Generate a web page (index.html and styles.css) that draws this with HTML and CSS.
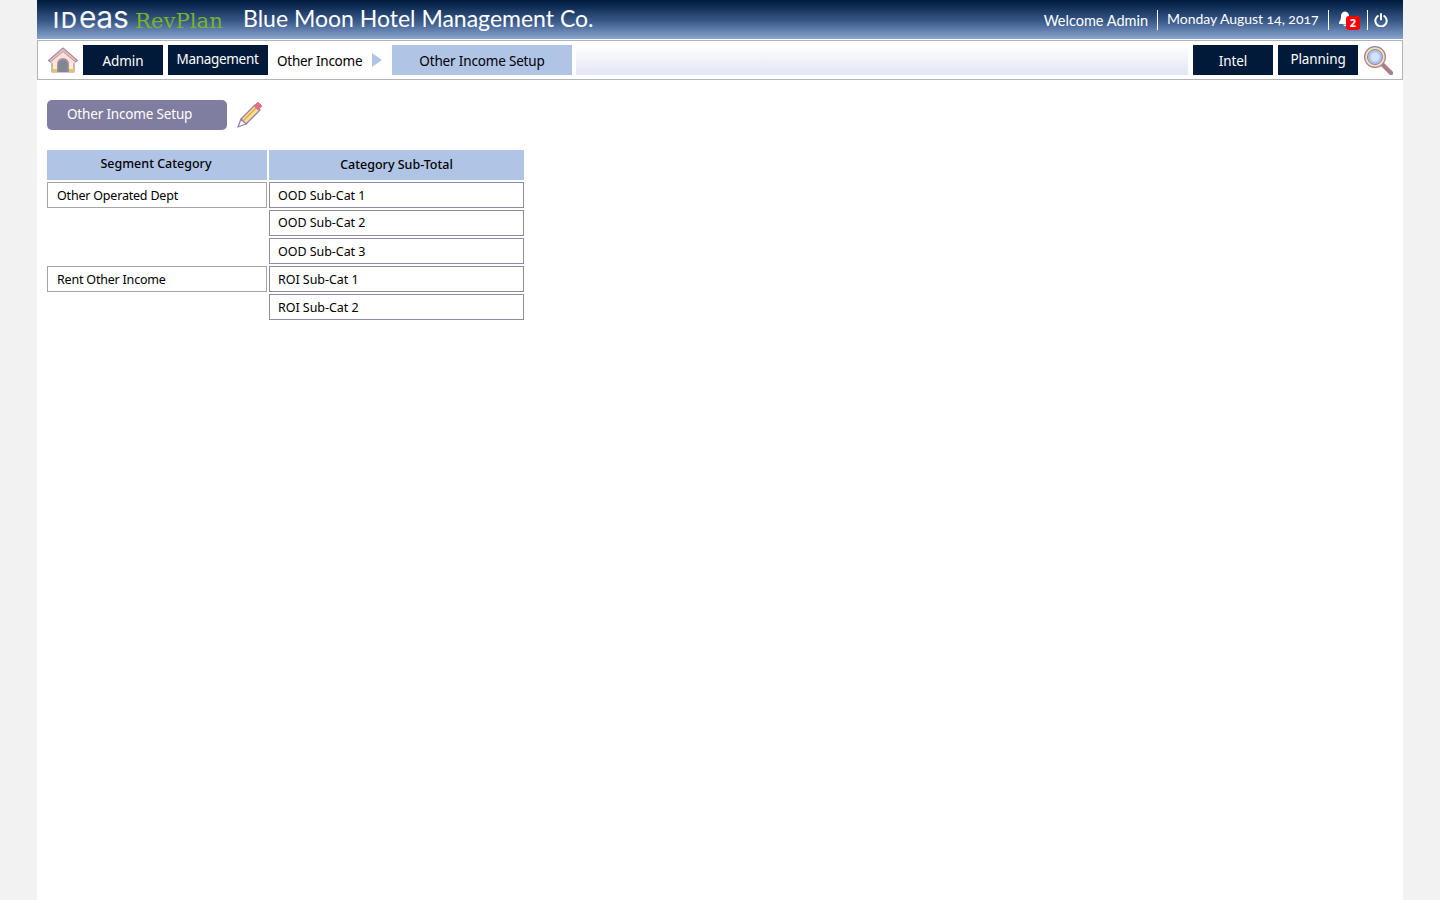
FILE: index.html
```html
<!DOCTYPE html>
<html lang="en">
<head>
<meta charset="utf-8">
<title>Other Income Setup</title>
<link rel="stylesheet" href="styles.css">
</head>
<body>
<div class="page">
  <header class="topbar">
    <div class="brand"><span class="logo"><span class="logo-caps">ID</span><span class="logo-low">eas</span></span><span class="revplan">RevPlan</span></div>
    <div class="company">Blue Moon Hotel Management Co.</div>
    <div class="user">
      <span class="welcome">Welcome Admin</span>
      <span class="date">Monday August 14, 2017</span>
      <span class="bell">
        <svg width="16" height="16" viewBox="0 0 16 16"><path fill="#fff" d="M7 .5C4.200.5 3 2.700 3 5.500c0 2.800-.8 4.500-2 5.700V13h12v-1.800c-1.200-1.200-2-2.900-2-5.700C11 2.700 9.800.5 7 .5z"/><path fill="#fff" d="M5.300 13.500h3.400a1.700 1.700 0 0 1-3.400 0z"/></svg>
        <b class="badge">2</b>
      </span>
      <span class="power">
        <svg width="14" height="14" viewBox="0 0 14 14" fill="none" stroke="#fff" stroke-width="2" stroke-linecap="round"><path d="M7 1v5.500"/><path d="M3.800 3a5.700 5.700 0 1 0 6.400 0"/></svg>
      </span>
    </div>
  </header>
  <nav class="navbar">
    <svg class="home" width="32" height="28" viewBox="0 0 32 28">
      <path d="M5 13h22v13H5z" fill="#fdeec0" stroke="#a58cb5" stroke-width="1.200"/>
      <path d="M16 2 1.500 14.500l2 1.500L16 6l12.500 10 2-1.500z" fill="#f3c3a8" stroke="#a58cb5" stroke-width="1.200" stroke-linejoin="round"/>
      <path d="M16 6 4.500 15.500V17h23v-1.500z" fill="#fbe2d2"/>
      <path d="M10 26V18a6 6 0 0 1 12 0v8z" fill="#a58cb5"/>
      <path d="M11.500 26V18.500a4.500 4.500 0 0 1 9 0V26z" fill="#7f8790"/>
      <path d="M5 23h5v3H5zM22 23h5v3h-5z" fill="#e8c560"/>
    </svg>
    <a class="navbtn">Admin</a>
    <a class="navbtn wide raised">Management</a>
    <span class="crumb">Other Income</span>
    <svg class="arrow" width="10" height="14" viewBox="0 0 10 14"><path d="M0 0l10 7-10 7z" fill="#b0c4e6"/></svg>
    <a class="current">Other Income Setup</a>
    <div class="fill"></div>
    <a class="navbtn">Intel</a>
    <a class="navbtn raised">Planning</a>
    <svg class="search" width="30" height="30" viewBox="0 0 30 30">
      <path d="M19.500 19.500 28 28" stroke="#9a7fae" stroke-width="4.500" stroke-linecap="round"/>
      <path d="M20.500 20.500 27.500 27.500" stroke="#b07f73" stroke-width="2.500" stroke-linecap="round"/>
      <circle cx="12" cy="12" r="11" fill="#9a7fae"/>
      <circle cx="12" cy="12" r="9.800" fill="#fbe0a0"/>
      <circle cx="12" cy="12" r="7.500" fill="#a9c6ee" stroke="#9a7fae" stroke-width="1"/>
      <circle cx="12" cy="12" r="4.500" fill="#d3e2f8"/>
    </svg>
  </nav>
  <main class="content">
    <div class="titlerow">
      <div class="pagetitle">Other Income Setup</div>
      <svg class="pencil" width="28" height="28" viewBox="0 0 28 28">
        <path d="M6 18 20 4l5 5-14 14z" fill="#fbe08c" stroke="#9a7fae" stroke-width="1.300" stroke-linejoin="round"/>
        <path d="M19 5l3-3a1.500 1.500 0 0 1 2 0l2 2a1.500 1.500 0 0 1 0 2l-3 3z" fill="#ee6f85" stroke="#c07a9a" stroke-width="1"/>
        <path d="M6 18l-3 8 8-3z" fill="#fff" stroke="#9a7fae" stroke-width="1.300" stroke-linejoin="round"/>
        <path d="M9 19 21 7" stroke="#e0a850" stroke-width="1.500"/>
      </svg>
    </div>
    <div class="grid">
      <div class="head">Segment Category</div>
      <div class="head nudge">Category Sub-Total</div>
      <div class="cell seg">Other Operated Dept</div>
      <div class="cell">OOD Sub-Cat 1</div>
      <div class="blank"></div>
      <div class="cell up">OOD Sub-Cat 2</div>
      <div class="blank"></div>
      <div class="cell">OOD Sub-Cat 3</div>
      <div class="cell seg">Rent Other Income</div>
      <div class="cell">ROI Sub-Cat 1</div>
      <div class="blank"></div>
      <div class="cell">ROI Sub-Cat 2</div>
    </div>
  </main>
</div>
</body>
</html>
```
FILE: styles.css
```css
* { box-sizing: border-box; }
html, body { margin: 0; height: 100%; }
body {
  background: #f2f2f2;
  font-family: "Noto Sans", "Open Sans", sans-serif;
  color: #000;
  overflow: hidden;
}
.page {
  width: 1366px;
  height: 900px;
  margin: 0 auto;
  background: #fff;
}
.topbar {
  height: 39px;
  display: flex;
  align-items: center;
  padding-left: 16px;
  color: #fff;
  background: linear-gradient(#001a3d 0%, #0d2a50 15%, #3a5a8a 55%, #8aa5d0 100%);
}
.brand {
  width: 190px;
  display: flex;
  align-items: baseline;
}
.logo {
  font-family: "Inter", sans-serif;
  color: #f4f6fa;
  width: 82px;
  line-height: 30px;
  white-space: nowrap;
}
.logo-caps {
  font-size: 22px;
  font-weight: 500;
  letter-spacing: 2px;
}
.logo-low {
  font-size: 30px;
  font-weight: 400;
  letter-spacing: -.3px;
}
.revplan {
  font-family: "DejaVu Serif", serif;
  font-size: 21.200px;
  color: #78b428;
}
.company {
  font-family: "Lato", sans-serif;
  font-size: 23px;
  white-space: nowrap;
  padding-bottom: 4px;
}
.user {
  margin-left: auto;
  display: flex;
  align-items: center;
  height: 20px;
  font-family: "Lato", sans-serif;
}
.welcome {
  padding-right: 9px;
  border-right: 1px solid #fff;
  height: 20px;
  line-height: 21px;
  font-size: 14.500px;
}
.date {
  padding: 0 9px;
  border-right: 1px solid #fff;
  height: 20px;
  line-height: 17px;
  width: 171px;
  white-space: nowrap;
  font-size: 14px;
  letter-spacing: -.03px;
  font-variant-numeric: oldstyle-nums;
}
.bell {
  position: relative;
  width: 39px;
  height: 20px;
  border-right: 1px solid #fff;
  padding: 1px 0 0 9px;
}
.bell svg, .power svg { display: block; }
.badge {
  position: absolute;
  left: 17px;
  top: 6px;
  width: 14px;
  height: 14px;
  border-radius: 3px;
  background: #f00;
  color: #fff;
  font: 700 11px/14px "Noto Sans", sans-serif;
  text-align: center;
}
.power {
  width: 35px;
  padding-left: 6px;
}
.navbar {
  height: 40px;
  margin-top: 1px;
  border: 1px solid #b4b4b4;
  display: flex;
  align-items: center;
  padding-left: 9px;
}
.home { margin-right: 4px; flex: none; }
.navbtn {
  flex: none;
  width: 80px;
  height: 30px;
  margin-right: 5px;
  background: #011a3a;
  color: #fff;
  font-size: 13.500px;
  letter-spacing: -.1px;
  line-height: 32px;
  text-align: center;
}
.navbtn.wide { width: 100px; margin-right: 9px; letter-spacing: -.3px; text-indent: -1px; }
.navbtn.raised { line-height: 28px; }
.crumb {
  font-size: 13.500px;
  letter-spacing: -.25px;
  width: 95px;
  flex: none;
  line-height: 32px;
  padding-top: 2px;
  white-space: nowrap;
}
.arrow { flex: none; margin-right: 10px; }
.current {
  flex: none;
  width: 180px;
  height: 30px;
  background: #b0c4e6;
  font-size: 13.500px;
  letter-spacing: -.17px;
  line-height: 32px;
  text-align: center;
  margin-right: 4px;
}
.fill {
  flex: none;
  width: 612px;
  height: 30px;
  margin-right: 5px;
  background: linear-gradient(#fff, #e2e6f3);
}
.search { flex: none; }
.content { padding: 20px 10px; }
.titlerow {
  display: flex;
  align-items: center;
  gap: 8px;
  height: 30px;
}
.pagetitle {
  width: 180px;
  height: 30px;
  border-radius: 5px;
  background: #7f7da0;
  color: #fff;
  font-size: 13.500px;
  letter-spacing: -.17px;
  line-height: 28px;
  padding-left: 20px;
}
.grid {
  margin-top: 20px;
  display: grid;
  grid-template-columns: 220px 255px;
  grid-template-rows: 30px repeat(5, 26px);
  gap: 2px;
}
.head {
  background: #b0c4e6;
  font-size: 12.500px;
  font-weight: 500;
  line-height: 27px;
  text-align: center;
  padding-right: 2px;
}
.head.nudge { line-height: 29px; padding-right: 0; }
.cell {
  border: 1px solid #8e8ca4;
  font-size: 12.500px;
  letter-spacing: -.05px;
  line-height: 25px;
  padding-left: 8px;
  white-space: nowrap;
}
.cell.up { line-height: 23px; }
.cell.seg { padding-left: 9px; border-color: #a5a5a5; letter-spacing: -.2px; }
```
